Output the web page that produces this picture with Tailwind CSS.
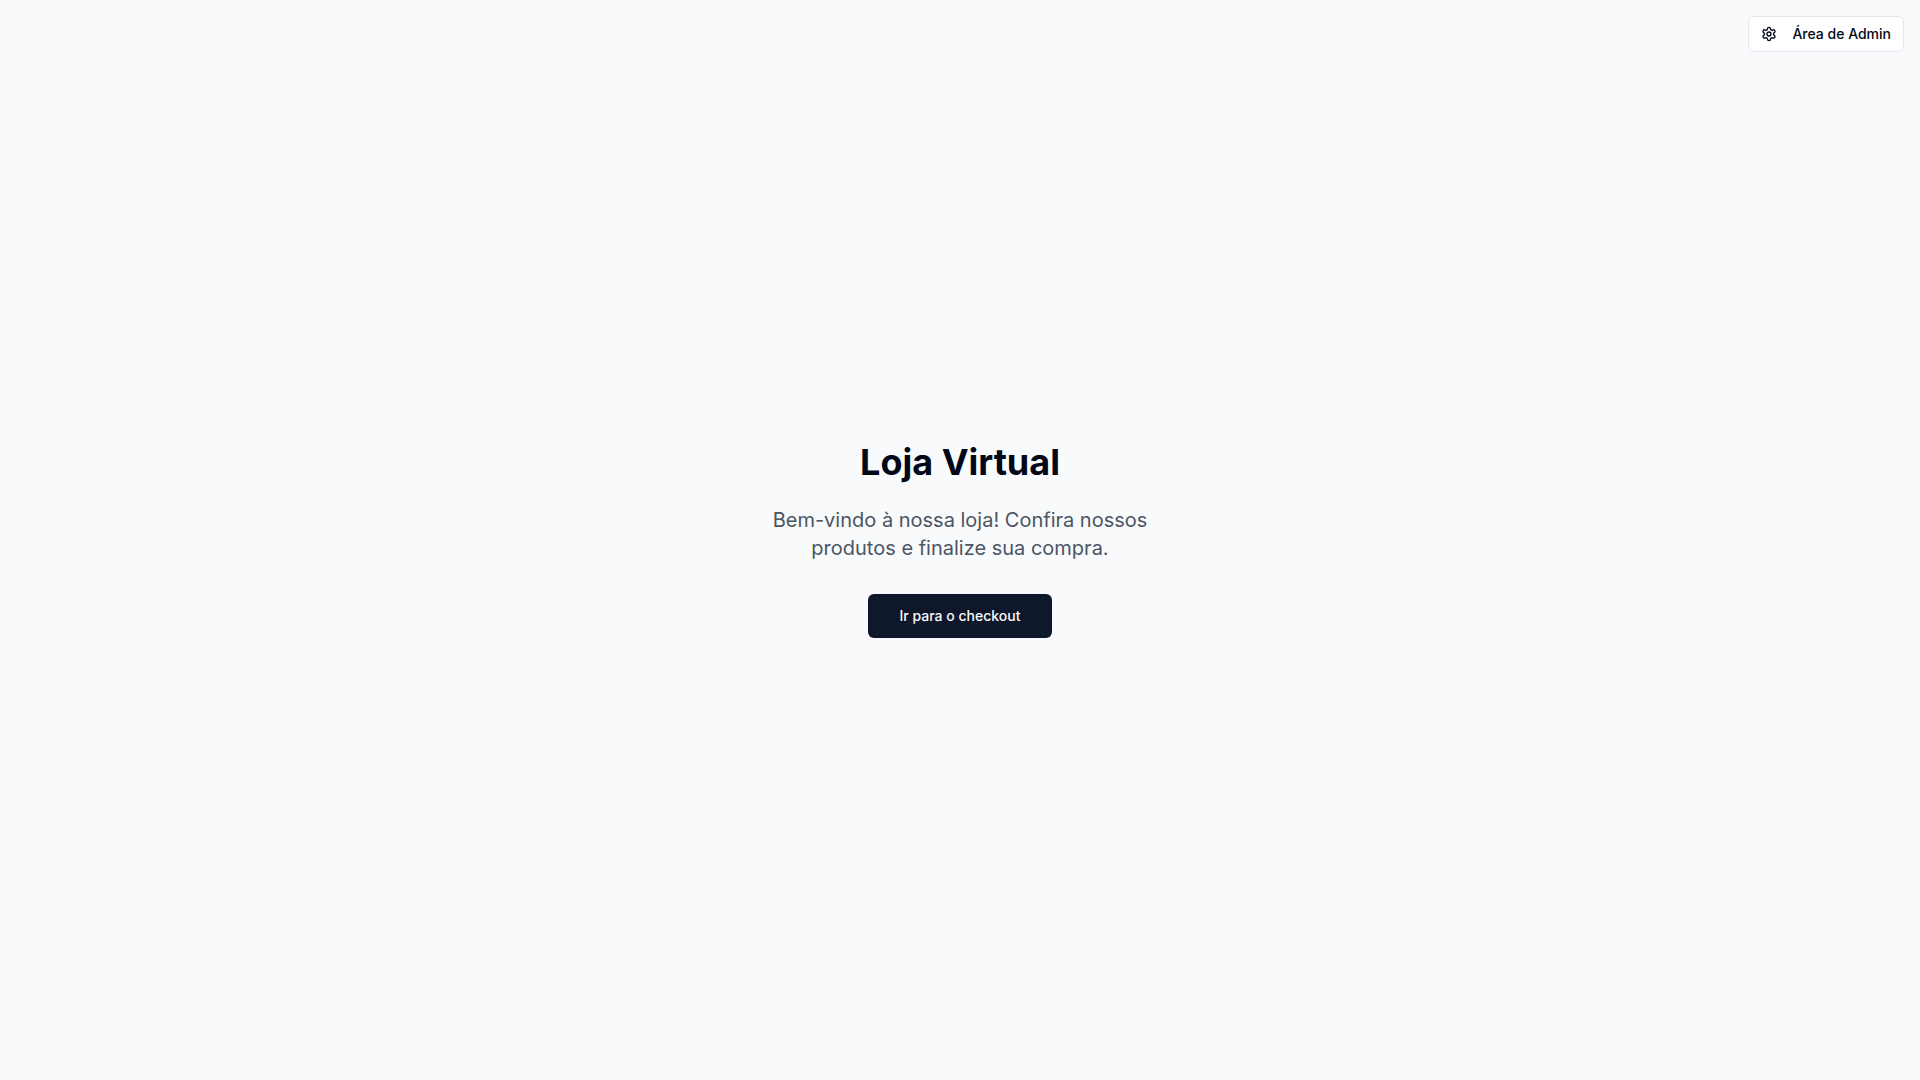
<!DOCTYPE html>
<html lang="pt-BR">
<head>
    <meta charset="UTF-8">
    <meta name="viewport" content="width=device-width, initial-scale=1.0">
    <title>Loja Virtual</title>
    <script src="https://cdn.jsdelivr.net/npm/@tailwindcss/browser@4"></script>
</head>
<body class="font-['Inter',sans-serif] text-[#020817] antialiased">
    <div class="relative flex min-h-screen flex-col items-center justify-center bg-[#f9fafb]">
        <div class="absolute top-4 right-4">
            <button type="button" class="flex h-9 items-center gap-[15px] rounded-md border border-[#e2e8f0] bg-white px-3 text-sm font-medium">
                <svg class="size-4" viewBox="0 0 24 24" fill="none" stroke="currentColor" stroke-width="2" stroke-linecap="round" stroke-linejoin="round" aria-hidden="true">
                    <path d="M12.22 2h-.44a2 2 0 0 0-2 2v.18a2 2 0 0 1-1 1.73l-.43.25a2 2 0 0 1-2 0l-.15-.08a2 2 0 0 0-2.73.73l-.22.38a2 2 0 0 0 .73 2.73l.15.1a2 2 0 0 1 1 1.72v.51a2 2 0 0 1-1 1.74l-.15.09a2 2 0 0 0-.73 2.73l.22.38a2 2 0 0 0 2.73.73l.15-.08a2 2 0 0 1 2 0l.43.25a2 2 0 0 1 1 1.73V20a2 2 0 0 0 2 2h.44a2 2 0 0 0 2-2v-.18a2 2 0 0 1 1-1.73l.43-.25a2 2 0 0 1 2 0l.15.08a2 2 0 0 0 2.73-.73l.22-.39a2 2 0 0 0-.73-2.73l-.15-.08a2 2 0 0 1-1-1.74v-.5a2 2 0 0 1 1-1.74l.15-.09a2 2 0 0 0 .73-2.73l-.22-.38a2 2 0 0 0-2.73-.73l-.15.08a2 2 0 0 1-2 0l-.43-.25a2 2 0 0 1-1-1.73V4a2 2 0 0 0-2-2z"/>
                    <circle cx="12" cy="12" r="3"/>
                </svg>
                Área de Admin
            </button>
        </div>

        <main class="w-full max-w-md p-6 text-center">
            <h1 class="mb-6 text-4xl font-bold">Loja Virtual</h1>
            <p class="mb-8 text-xl text-[#4b5563]">Bem-vindo à nossa loja! Confira nossos produtos e finalize sua compra.</p>
            <button type="button" class="inline-flex h-11 items-center justify-center rounded-md bg-[#0f172a] px-8 text-sm font-medium text-[#f8fafc]">Ir para o checkout</button>
        </main>
    </div>
</body>
</html>
